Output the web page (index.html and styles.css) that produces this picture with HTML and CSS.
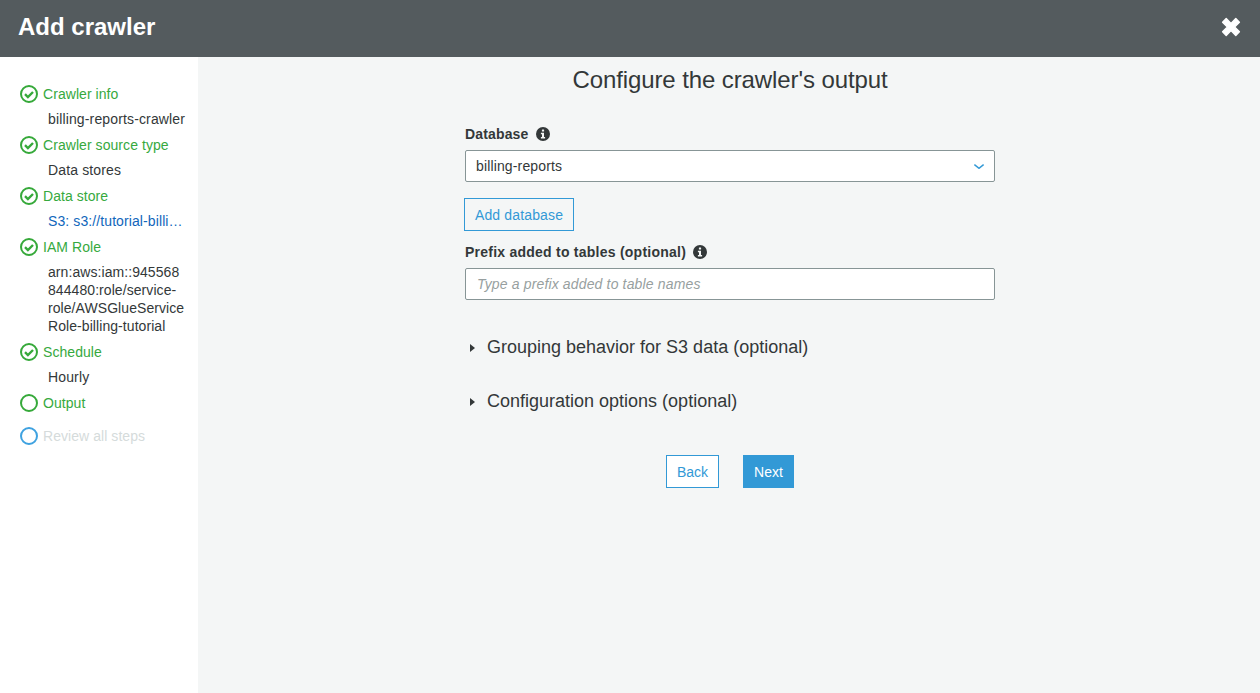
FILE: index.html
```html
<!DOCTYPE html>
<html lang="en">
<head>
<meta charset="utf-8">
<title>Add crawler</title>
<link rel="stylesheet" href="styles.css">
</head>
<body>
<header class="topbar">
  <h1 class="topbar-title">Add crawler</h1>
  <svg class="close-icon" width="20" height="20" viewBox="0 0 20 20"><path d="M1.6 5.2 L5.2 1.6 L10 6.4 L14.8 1.6 L18.4 5.2 L13.6 10 L18.4 14.8 L14.8 18.4 L10 13.6 L5.2 18.4 L1.6 14.8 L6.4 10 Z" fill="#fff" stroke="#fff" stroke-width="1.4" stroke-linejoin="round"/></svg>
</header>
<div class="layout">
  <nav class="sidebar">
    <div class="step">
      <div class="step-label"><svg class="step-icon" width="18" height="18" viewBox="0 0 18 18"><circle cx="9" cy="9" r="8" class="ring-green"/><path d="M5 9.2 L7.9 12 L13 7" class="tick"/></svg>Crawler info</div>
      <div class="step-detail">billing-reports-crawler</div>
    </div>
    <div class="step">
      <div class="step-label"><svg class="step-icon" width="18" height="18" viewBox="0 0 18 18"><circle cx="9" cy="9" r="8" class="ring-green"/><path d="M5 9.2 L7.9 12 L13 7" class="tick"/></svg>Crawler source type</div>
      <div class="step-detail">Data stores</div>
    </div>
    <div class="step">
      <div class="step-label"><svg class="step-icon" width="18" height="18" viewBox="0 0 18 18"><circle cx="9" cy="9" r="8" class="ring-green"/><path d="M5 9.2 L7.9 12 L13 7" class="tick"/></svg>Data store</div>
      <div class="step-detail step-link">S3: s3://tutorial-billi…</div>
    </div>
    <div class="step">
      <div class="step-label"><svg class="step-icon" width="18" height="18" viewBox="0 0 18 18"><circle cx="9" cy="9" r="8" class="ring-green"/><path d="M5 9.2 L7.9 12 L13 7" class="tick"/></svg>IAM Role</div>
      <div class="step-detail step-wrap">arn:aws:iam::945568<br>844480:role/service-<br>role/AWSGlueService<br>Role-billing-tutorial</div>
    </div>
    <div class="step">
      <div class="step-label"><svg class="step-icon" width="18" height="18" viewBox="0 0 18 18"><circle cx="9" cy="9" r="8" class="ring-green"/><path d="M5 9.2 L7.9 12 L13 7" class="tick"/></svg>Schedule</div>
      <div class="step-detail">Hourly</div>
    </div>
    <div class="step step-current">
      <div class="step-label"><svg class="step-icon" width="18" height="18" viewBox="0 0 18 18"><circle cx="9" cy="9" r="8" class="ring-green"/></svg>Output</div>
    </div>
    <div class="step step-todo">
      <div class="step-label"><svg class="step-icon" width="18" height="18" viewBox="0 0 18 18"><circle cx="9" cy="9" r="8" class="ring-blue"/></svg>Review all steps</div>
    </div>
  </nav>
  <main class="content">
    <h2 class="page-title">Configure the crawler's output</h2>
    <form class="form">
      <div class="field-label field-label-first">Database<svg class="info-icon" width="14" height="14" viewBox="0 0 14 14"><circle cx="7" cy="7" r="7" fill="#333839"/><rect x="5.9" y="2.4" width="2.2" height="2.2" rx=".5" fill="#f4f6f6"/><path d="M4.9 5.7 H8 V9.9 H9.1 V11.4 H4.9 V9.9 H6 V7.2 H4.9 Z" fill="#f4f6f6"/></svg></div>
      <div class="select">
        <span>billing-reports</span>
        <svg width="10" height="5" viewBox="0 0 10 5"><path d="M.4 .6 L5 4.3 L9.6 .6" fill="none" stroke="#3299d6" stroke-width="1.5"/></svg>
      </div>
      <button type="button" class="btn btn-outline btn-add">Add database</button>
      <div class="field-label field-label-prefix">Prefix added to tables (optional)<svg class="info-icon" width="14" height="14" viewBox="0 0 14 14"><circle cx="7" cy="7" r="7" fill="#333839"/><rect x="5.9" y="2.4" width="2.2" height="2.2" rx=".5" fill="#f4f6f6"/><path d="M4.9 5.7 H8 V9.9 H9.1 V11.4 H4.9 V9.9 H6 V7.2 H4.9 Z" fill="#f4f6f6"/></svg></div>
      <div class="text-input">Type a prefix added to table names</div>
      <div class="expander expander-first"><span class="caret"></span>Grouping behavior for S3 data (optional)</div>
      <div class="expander"><span class="caret"></span>Configuration options (optional)</div>
      <div class="actions">
        <button type="button" class="btn btn-outline btn-back">Back</button>
        <button type="button" class="btn btn-solid">Next</button>
      </div>
    </form>
  </main>
</div>
</body>
</html>
```

FILE: styles.css
```css
* { box-sizing: border-box; }
html, body { height: 100%; }
body {
  margin: 0;
  display: flex;
  flex-direction: column;
  font-family: "Liberation Sans", Arial, sans-serif;
  font-size: 14px;
  color: #333839;
  overflow: hidden;
}
.topbar {
  height: 57px;
  flex: none;
  background: #545b5e;
  display: flex;
  align-items: center;
  justify-content: space-between;
  padding: 0 19px 3px 18px;
}
.topbar-title { margin: 0; font-size: 24px; font-weight: 700; color: #fff; }
.close-icon { display: block; }
.layout { flex: 1; display: flex; min-height: 0; }
.sidebar {
  width: 198px;
  flex: none;
  background: #fff;
  padding: 26px 10px 0 20px;
}
.step { margin-bottom: 6px; }
.step-current { margin-bottom: 11px; }
.step-label {
  height: 22px;
  display: flex;
  align-items: center;
  gap: 5px;
  color: #36a93e;
  letter-spacing: 0.06px;
}
.step-todo .step-label { color: #d5dbdb; }
.step-icon { flex: none; display: block; }
.ring-green { fill: none; stroke: #36a93a; stroke-width: 2; }
.ring-blue { fill: none; stroke: #3fa2e0; stroke-width: 2; }
.tick { fill: none; stroke: #36a93a; stroke-width: 2.4; }
.step-detail {
  margin: 5px 0 0 28px;
  line-height: 18px;
  white-space: nowrap;
  letter-spacing: 0.14px;
  color: #333839;
}
.step-wrap { letter-spacing: 0.07px; }
.step-link { color: #1166bb; letter-spacing: 0.1px; }
.content {
  flex: 1;
  background: #f4f6f6;
  padding: 0 0 0 2px;
  display: flex;
  flex-direction: column;
  align-items: center;
}
.page-title {
  margin: 8px 0 0;
  font-size: 24px;
  line-height: 30px;
  font-weight: 400;
  letter-spacing: -0.1px;
  color: #333839;
}
.form { width: 530px; }
.field-label {
  display: flex;
  align-items: center;
  gap: 7px;
  font-weight: 700;
  height: 18px;
  letter-spacing: 0.24px;
}
.field-label-first { margin-top: 30px; letter-spacing: 0.15px; gap: 8px; }
.field-label-prefix { margin-top: 12px; }
.info-icon { flex: none; display: block; }
.select, .text-input {
  height: 32px;
  margin-top: 7px;
  background: #fff;
  border: 1px solid #879596;
  border-radius: 2px;
  padding: 0 10px;
  display: flex;
  align-items: center;
  justify-content: space-between;
  line-height: 30px;
}
.select { letter-spacing: 0.14px; }
.text-input { color: #979fa0; font-style: italic; padding-left: 11px; letter-spacing: 0.15px; }
.btn {
  font-family: inherit;
  font-size: 14px;
  height: 33px;
  padding: 0;
  cursor: pointer;
  display: block;
}
.btn-outline { background: #fff; border: 1px solid #3299d6; color: #3299d6; }
.btn-solid { background: #3299d6; border: 1px solid #3299d6; color: #fff; width: 51px; }
.btn-add { width: 110px; margin: 16px 0 0 -1px; background: transparent; letter-spacing: 0.15px; }
.btn-back { width: 53px; }
.expander {
  display: flex;
  align-items: center;
  height: 24px;
  margin-top: 30px;
  font-size: 18px;
  color: #333839;
}
.expander-first { margin-top: 35px; }
.caret {
  width: 0;
  height: 0;
  margin: 2px 12px 0 5px;
  border-left: 5px solid #333839;
  border-top: 4.5px solid transparent;
  border-bottom: 4.5px solid transparent;
}
.actions {
  display: flex;
  justify-content: center;
  gap: 24px;
  margin-top: 42px;
}
```
